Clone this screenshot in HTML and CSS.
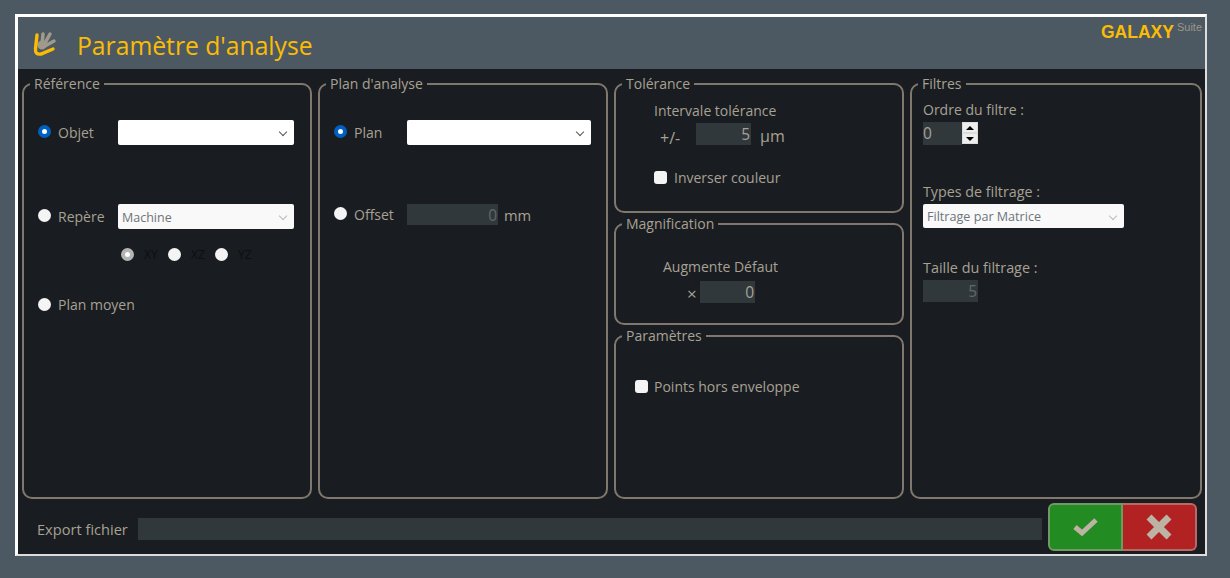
FILE: index.html

```html
<!DOCTYPE html>
<html lang="fr">
<head>
  <meta charset="UTF-8">
  <title>Paramètre d'analyse</title>
  <link rel="stylesheet" href="styles.css">
</head>
<body>
  <div class="window">
    <div class="header">
      <svg class="logo" viewBox="0 0 24 26" width="24" height="26">
        <g fill="none" stroke-linecap="round">
          <path d="M9 14L10 3M11 14L17 3M12 15L21 10" stroke="#a09a8c" stroke-width="3.5"/>
          <circle cx="9" cy="14" r="3.5" fill="#a09a8c" stroke="#a09a8c" stroke-width="2"/>
          <path d="M4 4L2.5 18Q2 24 8 23L20 18" stroke="#fcbc04" stroke-width="3.4"/>
        </g>
      </svg>
      <h1>Paramètre d'analyse</h1>
      <div class="brand"><b>GALAXY</b><span>Suite</span></div>
    </div>

    <div class="panels">
      <fieldset class="box">
        <legend>Référence</legend>
        <div class="row ref-row1">
          <input type="radio" name="ref" checked>
          <label class="lbl-ref">Objet</label>
          <div class="select-wrap w176"><select></select></div>
        </div>
        <div class="row ref-row2">
          <input type="radio" name="ref">
          <label class="lbl-ref">Repère</label>
          <div class="select-wrap w176 faded"><select class="dim"><option>Machine</option></select></div>
        </div>
        <div class="row axes">
          <input type="radio" name="axe" class="off" checked><span>XY</span>
          <input type="radio" name="axe"><span>XZ</span>
          <input type="radio" name="axe"><span>YZ</span>
        </div>
        <div class="row ref-row4">
          <input type="radio" name="ref">
          <label>Plan moyen</label>
        </div>
      </fieldset>

      <fieldset class="box">
        <legend>Plan d'analyse</legend>
        <div class="row ref-row1">
          <input type="radio" name="plan" checked>
          <label class="lbl-plan">Plan</label>
          <div class="select-wrap w184"><select></select></div>
        </div>
        <div class="row plan-row2">
          <input type="radio" name="plan">
          <label class="lbl-plan">Offset</label>
          <input type="text" class="num off w91" value="0">
          <span class="unit-mm">mm</span>
        </div>
      </fieldset>

      <div class="stack">
        <fieldset class="box tol">
          <legend>Tolérance</legend>
          <div class="title">Intervale tolérance</div>
          <div class="row tol-row">
            <span class="plusminus">+/-</span>
            <input type="text" class="num w55" value="5">
            <span class="unit">µm</span>
          </div>
          <div class="row tol-check">
            <input type="checkbox">
            <label>Inverser couleur</label>
          </div>
        </fieldset>
        <fieldset class="box mag">
          <legend>Magnification</legend>
          <div class="title">Augmente Défaut</div>
          <div class="row mag-row">
            <span class="times">×</span>
            <input type="text" class="num w55" value="0">
          </div>
        </fieldset>
        <fieldset class="box par">
          <legend>Paramètres</legend>
          <div class="row">
            <input type="checkbox">
            <label>Points hors enveloppe</label>
          </div>
        </fieldset>
      </div>

      <fieldset class="box filtres">
        <legend>Filtres</legend>
        <div class="cap">Ordre du filtre :</div>
        <div class="row spin">
          <input type="text" class="num left" value="0">
          <div class="spinner">
            <span class="up"></span>
            <span class="down"></span>
          </div>
        </div>
        <div class="cap cap2">Types de filtrage :</div>
        <div class="select-wrap w201 faded"><select class="dim"><option>Filtrage par Matrice</option></select></div>
        <div class="cap cap3">Taille du filtrage :</div>
        <input type="text" class="num off w55" value="5">
      </fieldset>
    </div>

    <div class="footer">
      <label>Export fichier</label>
      <input type="text" class="path">
      <div class="actions">
        <button class="ok">
          <svg viewBox="0 0 26 20" width="26" height="20"><path d="M2 10L9 16L23 3" fill="none" stroke="#bdb3a5" stroke-width="5"/></svg>
        </button>
        <button class="cancel">
          <svg viewBox="0 0 26 26" width="26" height="26"><path d="M3 3L23 23M23 3L3 23" fill="none" stroke="#bdb3a5" stroke-width="7"/></svg>
        </button>
      </div>
    </div>
  </div>
</body>
</html>
```

FILE: styles.css

```css
* {
  box-sizing: border-box;
}

body {
  margin: 0;
  height: 578px;
  overflow: hidden;
  background-color: #4c5962;
  font-family: "Open Sans", "Noto Sans", sans-serif;
  font-size: 14px;
  line-height: 20px;
  color: #a8a194;
}

.window {
  width: 1192px;
  height: 542px;
  margin: 14px 0 0 15px;
  background-color: #191d21;
  border-style: solid;
  border-color: #fff #ddd #ddd #fff;
  border-width: 3px 2px 2px 3px;
  display: flex;
  flex-direction: column;
}

.header {
  height: 52px;
  flex: none;
  background-color: #4c5962;
  display: flex;
  align-items: center;
  padding-left: 15px;
}

.logo {
  margin-top: 1px;
}

h1 {
  margin: 6px 0 0 20px;
  font-size: 24.7px;
  line-height: 34px;
  font-weight: 400;
  color: #fcbc04;
}

.brand {
  margin-left: auto;
  margin-right: 3px;
  align-self: flex-start;
  padding-top: 5px;
  display: flex;
  font-family: "Liberation Sans", sans-serif;
}

.brand b {
  font-size: 17.5px;
  color: #fcbc04;
}

.brand span {
  font-size: 11px;
  line-height: 14px;
  margin: -2px 0 0 3px;
  color: #9a968c;
}

.panels {
  height: 430px;
  flex: none;
  padding: 5px 0 0 4px;
  display: grid;
  grid-template-columns: 290px 290px 290px 292px;
  column-gap: 6px;
}

.box {
  margin: 0;
  padding: 0 0 0 14px;
  min-width: 0;
  border: 2px solid #80786c;
  border-radius: 10px;
}

legend {
  padding: 0 4px;
  margin-left: -8px;
  line-height: 20px;
}

.stack {
  display: flex;
  flex-direction: column;
  gap: 1px;
}

.tol { height: 139px; padding-left: 38px; }
.mag { height: 111px; padding-left: 47px; }
.par { flex: 1; padding: 31px 0 0 19px; }
.filtres { padding-left: 11px; }

.tol legend { margin-left: -32px; }
.mag legend { margin-left: -41px; }
.par legend { margin-left: -13px; }
.filtres legend { margin-left: -5px; }

.row {
  display: flex;
  align-items: center;
  min-height: 20px;
}

.ref-row1 { margin-top: 26px; }
.ref-row2 { margin-top: 59px; }
.ref-row4 { margin-top: 30px; }
.plan-row2 { margin-top: 59px; height: 21px; }

.lbl-ref { width: 60px; }
.lbl-plan { width: 53px; }

.title { margin-top: 7px; }
.mag .title { margin-top: 23px; }

.tol-row { margin-top: 2px; height: 22px; }
.tol-check { margin-top: 23px; }
.mag-row { margin-top: 4px; height: 22px; }

.plusminus { width: 42px; padding: 7px 0 0 6px; font-size: 16px; }
.unit { margin-left: 9px; padding-top: 3px; font-size: 16px; }
.unit-mm { margin-left: 6px; font-size: 14.7px; }
.times { width: 13px; margin-left: 24px; padding-top: 3px; font-size: 17px; }

input[type="radio"],
input[type="checkbox"] {
  appearance: none;
  width: 13px;
  height: 13px;
  margin: 0 7px 2px 0;
  flex: none;
  background-color: #f4f4f4;
  border-radius: 50%;
}

input[type="checkbox"] {
  border-radius: 3px;
}

.par input[type="checkbox"] {
  margin-right: 6px;
}

input[type="radio"]:checked {
  background-color: #fff;
  border: 4px solid #0060c0;
}

input[type="radio"].off:checked {
  border-color: #b4b4b4;
}

.axes {
  margin: 16px 0 0 83px;
  color: #0c0e10;
  font-size: 12px;
}

.axes input {
  margin-right: 10px;
}

.axes span {
  width: 24px;
}

.select-wrap {
  position: relative;
  height: 25px;
}

.w176 { width: 176px; }
.w184 { width: 184px; }
.w201 { width: 201px; height: 24px; }

.select-wrap select {
  appearance: none;
  width: 100%;
  height: 100%;
  padding: 2px 4px 0;
  border: none;
  border-radius: 2px;
  background-color: #fff;
  font-family: inherit;
  font-size: 12.5px;
  color: #555;
}

.w201 select {
  font-size: 12.6px;
  padding-top: 0;
}

.select-wrap select.dim {
  background-color: #f9f9f9;
  color: #6d7479;
}

.select-wrap::after {
  content: "";
  position: absolute;
  right: 8px;
  top: 9px;
  width: 5px;
  height: 5px;
  border-right: 1px solid #555;
  border-bottom: 1px solid #555;
  transform: rotate(45deg);
}

.select-wrap.faded::after {
  border-color: #bbb;
}

.num {
  height: 22px;
  padding: 0 1px;
  border: none;
  background-color: #31383b;
  font-family: inherit;
  font-size: 15.5px;
  color: #a8a194;
  text-align: right;
}

.num.off {
  color: #62686a;
}

.num.left {
  width: 39px;
  height: 23px;
  padding: 0 0 2px;
  text-align: left;
}

.w55 { width: 55px; }
.w91 { width: 91px; height: 21px; }

.cap { margin-top: 6px; }
.cap2 { margin-top: 37px; margin-bottom: 2px; font-size: 14.3px; }
.cap3 { margin-top: 30px; margin-bottom: 2px; font-size: 14.4px; }

.spin {
  margin-top: 2px;
  height: 23px;
  align-items: flex-start;
}

.spinner {
  width: 16px;
  height: 22px;
  padding: 1px;
  background-color: #dcdcdc;
  display: flex;
  flex-direction: column;
  gap: 2px;
}

.spinner span {
  flex: 1;
  background-color: #eee;
  position: relative;
}

.spinner span::after {
  content: "";
  position: absolute;
  left: 3px;
  top: 3px;
  border-left: 4px solid transparent;
  border-right: 4px solid transparent;
}

.spinner .up::after {
  border-bottom: 4px solid #000;
}

.spinner .down::after {
  border-top: 4px solid #000;
}

.footer {
  flex: 1;
  display: flex;
  align-items: flex-start;
  padding-left: 19px;
}

.footer label {
  width: 101px;
  margin-top: 20px;
  font-size: 14.6px;
}

.path {
  width: 904px;
  height: 22px;
  margin-top: 19px;
  border: none;
  background-color: #31383b;
}

.actions {
  display: flex;
  margin: 4px 0 0 6px;
}

.actions button {
  height: 48px;
  padding: 0;
  border-width: 2px;
  border-style: solid;
  display: flex;
  align-items: center;
  justify-content: center;
}

.actions .ok {
  width: 75px;
  background-color: #228b22;
  border-color: #6f9a64;
  border-radius: 6px 0 0 6px;
}

.actions .cancel {
  width: 74px;
  background-color: #b22222;
  border-color: #b56a66;
  border-left: none;
  border-radius: 0 6px 6px 0;
}
```
